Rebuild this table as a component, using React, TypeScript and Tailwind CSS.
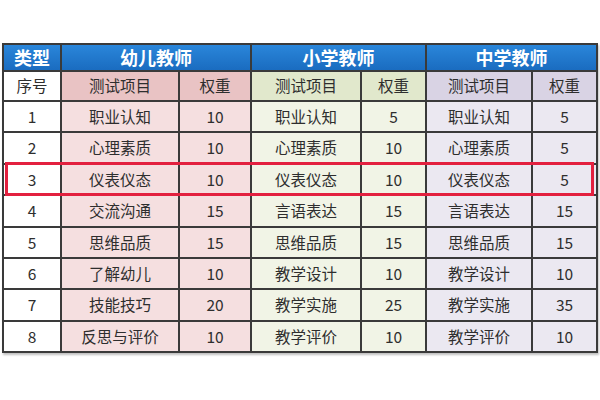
import React from 'react';

type Row = { no: string; a: [string, string]; b: [string, string]; c: [string, string] };

const rows: Row[] = [
  { no: '1', a: ['职业认知', '10'], b: ['职业认知', '5'], c: ['职业认知', '5'] },
  { no: '2', a: ['心理素质', '10'], b: ['心理素质', '10'], c: ['心理素质', '5'] },
  { no: '3', a: ['仪表仪态', '10'], b: ['仪表仪态', '10'], c: ['仪表仪态', '5'] },
  { no: '4', a: ['交流沟通', '15'], b: ['言语表达', '15'], c: ['言语表达', '15'] },
  { no: '5', a: ['思维品质', '15'], b: ['思维品质', '15'], c: ['思维品质', '15'] },
  { no: '6', a: ['了解幼儿', '10'], b: ['教学设计', '10'], c: ['教学设计', '10'] },
  { no: '7', a: ['技能技巧', '20'], b: ['教学实施', '25'], c: ['教学实施', '35'] },
  { no: '8', a: ['反思与评价', '10'], b: ['教学评价', '10'], c: ['教学评价', '10'] },
];

const cell = 'flex items-center justify-center';
const blue = `${cell} bg-gradient-to-b from-[#2a86da] to-[#1a6cc0] text-white font-bold text-[18px]`;

export default function App() {
  return (
    <div
      className="w-[600px] h-[400px] bg-white pt-[43px] pl-[2px] text-[#2e2e2e]"
      style={{ fontFamily: '"Noto Sans CJK SC", "Noto Sans", sans-serif' }}
    >
      <div className="relative w-[596px]">
        <div className="grid grid-cols-[56px_116px_70px_108px_63px_104px_63px] grid-rows-[25px_28px_repeat(8,29.375px)] gap-[2px] bg-[#3a3a3a] border-2 border-[#3a3a3a] shadow-[1px_2px_2px_rgba(0,0,0,0.25)] text-[15.5px]">
          {/* blue title row */}
          <div className={blue}>类型</div>
          <div className={`${blue} col-span-2`}>幼儿教师</div>
          <div className={`${blue} col-span-2`}>小学教师</div>
          <div className={`${blue} col-span-2`}>中学教师</div>

          {/* sub header */}
          <div className={`${cell} bg-white`}>序号</div>
          <div className={`${cell} bg-[#e9c3c4]`}>测试项目</div>
          <div className={`${cell} bg-[#e9c3c4]`}>权重</div>
          <div className={`${cell} bg-[#e1e8cc]`}>测试项目</div>
          <div className={`${cell} bg-[#e1e8cc]`}>权重</div>
          <div className={`${cell} bg-[#d9d3e4]`}>测试项目</div>
          <div className={`${cell} bg-[#d9d3e4]`}>权重</div>

          {rows.map((r) => (
            <React.Fragment key={r.no}>
              <div className={`${cell} bg-white`}>{r.no}</div>
              <div className={`${cell} bg-[#f5dfe0]`}>{r.a[0]}</div>
              <div className={`${cell} bg-[#f5dfe0]`}>{r.a[1]}</div>
              <div className={`${cell} bg-[#f1f4e6]`}>{r.b[0]}</div>
              <div className={`${cell} bg-[#f1f4e6]`}>{r.b[1]}</div>
              <div className={`${cell} bg-[#ebe8f1]`}>{r.c[0]}</div>
              <div className={`${cell} bg-[#ebe8f1]`}>{r.c[1]}</div>
            </React.Fragment>
          ))}
        </div>

        {/* highlight on row 3 */}
        <div className="absolute left-[3px] top-[119px] w-[589px] h-[34px] border-[3px] border-[#e3203f] pointer-events-none" />
      </div>
    </div>
  );
}
